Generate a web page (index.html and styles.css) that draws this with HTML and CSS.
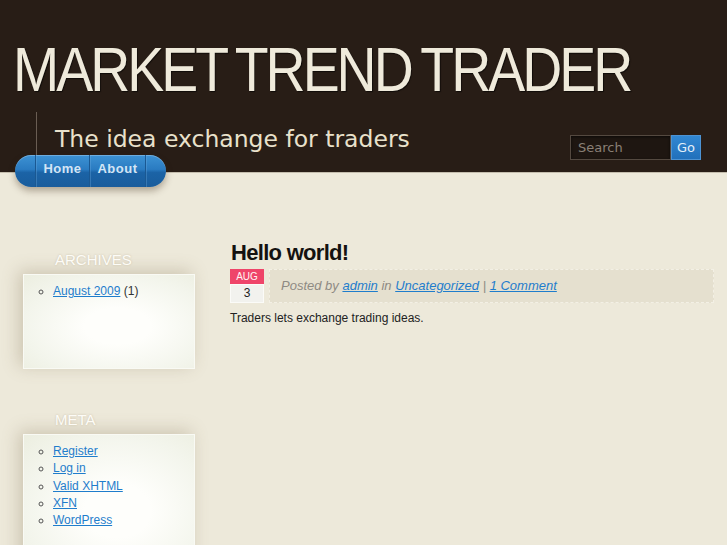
FILE: index.html
```html
<!DOCTYPE html>
<html>
<head>
<meta charset="utf-8">
<title>Market Trend Trader</title>
<link rel="stylesheet" href="styles.css">
</head>
<body>
<header class="site-header">
  <h1 class="site-title">MARKET TREND TRADER</h1>
  <div class="header-row">
    <p class="tagline">The idea exchange for traders</p>
    <form class="search">
      <input class="search-input" type="text" placeholder="Search">
      <button class="search-btn" type="button">Go</button>
    </form>
  </div>
</header>
<nav class="nav">
  <span class="nav-cap nav-cap-left"></span>
  <a class="nav-link nav-home" href="#">Home</a>
  <a class="nav-link nav-about" href="#">About</a>
  <span class="nav-cap nav-cap-right"></span>
</nav>
<div class="main">
  <aside class="sidebar">
    <section class="widget">
      <h2 class="widget-title">ARCHIVES</h2>
      <div class="widget-box widget-archives">
        <ul class="widget-list">
          <li><a href="#">August 2009</a>&nbsp;(1)</li>
        </ul>
      </div>
    </section>
    <section class="widget">
      <h2 class="widget-title">META</h2>
      <div class="widget-box widget-meta">
        <ul class="widget-list">
          <li><a href="#">Register</a></li>
          <li><a href="#">Log in</a></li>
          <li><a href="#">Valid XHTML</a></li>
          <li><a href="#">XFN</a></li>
          <li><a href="#">WordPress</a></li>
        </ul>
      </div>
    </section>
  </aside>
  <article class="post">
    <h2 class="post-title">Hello world!</h2>
    <div class="post-meta">
      <div class="date">
        <div class="date-month">AUG</div>
        <div class="date-day">3</div>
      </div>
      <div class="meta-bar">Posted by <a href="#">admin</a> in <a href="#">Uncategorized</a> | <a href="#">1 Comment</a></div>
    </div>
    <p class="post-body">Traders lets exchange trading ideas.</p>
  </article>
</div>
</body>
</html>
```
FILE: styles.css
```css
html, body {
  margin: 0;
  padding: 0;
}
body {
  background: #ede9da;
  font-family: "Liberation Sans", Arial, sans-serif;
  width: 727px;
  height: 545px;
  overflow: hidden;
}
.site-header {
  box-sizing: border-box;
  height: 173px;
  background: #281d16;
  border-bottom: 1px solid #c4bdad;
  padding-top: 38px;
}
.site-title {
  margin: 0;
  font-family: "Liberation Sans", Arial, sans-serif;
  font-weight: normal;
  font-size: 63px;
  line-height: 63px;
  letter-spacing: -3.4px;
  word-spacing: -2px;
  color: #efeadb;
  text-shadow: 1px 1px 1px rgba(0, 0, 0, 0.6);
  white-space: nowrap;
  padding-left: 13px;
  transform: scaleX(0.88);
  transform-origin: 13px 0;
}
.header-row {
  display: flex;
  justify-content: space-between;
  align-items: flex-start;
  margin-top: 11px;
}
.tagline {
  margin: 0 0 0 36px;
  height: 48px;
  border-left: 1px solid #6a5d53;
  padding: 13px 0 0 18px;
  font-family: "DejaVu Sans", sans-serif;
  font-size: 23.5px;
  line-height: 28px;
  color: #e9e1cb;
  white-space: nowrap;
}
.search {
  display: flex;
  margin: 23px 26px 0 0;
}
.search-input {
  box-sizing: border-box;
  width: 101px;
  height: 25px;
  margin: 0;
  padding: 0 0 0 7px;
  background: #1e1611;
  border: 1px solid #544940;
  box-shadow: inset 0 1px 3px rgba(0, 0, 0, 0.6);
  font-family: "DejaVu Sans", sans-serif;
  font-size: 13px;
  color: #d0c6b8;
  outline: none;
}
.search-input::placeholder {
  color: #8a8076;
}
.search-btn {
  box-sizing: border-box;
  width: 30px;
  height: 25px;
  margin: 0;
  padding: 0;
  border: 1px solid #4d93d3;
  background: linear-gradient(#3187d2, #2170bb);
  font-family: "DejaVu Sans", sans-serif;
  font-size: 13px;
  color: #e3eef8;
}
.nav {
  position: relative;
  z-index: 2;
  display: flex;
  width: 151px;
  height: 32px;
  margin: -18px 0 0 15px;
  border-radius: 16px;
  background: linear-gradient(#3d92d4 0%, #2a7bc1 45%, #1b63a6 55%, #195c9c 100%);
  box-shadow: 0 4px 7px rgba(60, 40, 20, 0.35), inset 0 1px 0 rgba(255, 255, 255, 0.25);
}
.nav-cap-left {
  width: 20px;
}
.nav-cap-right {
  width: 20px;
  border-left: 1px solid #1a5892;
  box-shadow: inset 1px 0 0 rgba(120, 180, 230, 0.3);
}
.nav-link {
  border-left: 1px solid #1a5892;
  box-shadow: inset 1px 0 0 rgba(120, 180, 230, 0.3);
  text-align: center;
  font-weight: bold;
  font-size: 13px;
  letter-spacing: 0.5px;
  line-height: 28px;
  color: #d3e5f5;
  text-decoration: none;
}
.nav-home {
  width: 53px;
}
.nav-about {
  width: 55px;
}
.main {
  display: flex;
  align-items: flex-start;
  padding-top: 53px;
}
.sidebar {
  width: 172px;
  margin-left: 23px;
  padding-top: 11px;
}
.widget {
  margin-bottom: 42px;
}
.widget-title {
  margin: 0 0 5px;
  padding-left: 32px;
  font-weight: normal;
  font-size: 15px;
  line-height: 18px;
  color: #fdfcf7;
  text-shadow: 0 0 2px rgba(160, 140, 110, 0.45);
}
.widget-box {
  box-sizing: border-box;
  border: 1px solid #f9faf4;
  background: radial-gradient(ellipse at 55% 55%, #fefefb 25%, #f3f5ec 70%, #eceee0 100%);
  box-shadow: -4px -3px 16px rgba(120, 100, 70, 0.28);
}
.widget-archives {
  min-height: 95px;
}
.widget-meta {
  min-height: 140px;
}
.widget-list {
  margin: 0;
  padding: 8px 0 8px 29px;
  list-style: circle;
  font-size: 12px;
  line-height: 17.3px;
  color: #333;
}
.widget-list li::marker {
  color: #555;
}
.widget-list a,
.meta-bar a {
  color: #1f7dcc;
  text-decoration: underline;
}
.post {
  width: 484px;
  margin-left: 35px;
}
.post-title {
  margin: 0 0 3px;
  padding-left: 1px;
  font-weight: bold;
  font-size: 22px;
  line-height: 26px;
  letter-spacing: -0.7px;
  color: #141210;
}
.post-meta {
  display: flex;
  gap: 5px;
  height: 34px;
}
.date {
  width: 34px;
}
.date-month {
  height: 15px;
  background: #ef456a;
  color: #fff3f4;
  font-size: 10px;
  line-height: 15px;
  text-align: center;
}
.date-day {
  box-sizing: border-box;
  height: 19px;
  background: #f2f2ee;
  border: 1px solid #fbfbf8;
  color: #222;
  font-size: 12px;
  line-height: 17px;
  text-align: center;
}
.meta-bar {
  flex: 1;
  box-sizing: border-box;
  height: 34px;
  padding-left: 11px;
  background: #e5e0cf;
  border: 1px dashed #f3f0e5;
  font-style: italic;
  font-size: 13px;
  line-height: 31px;
  color: #8e8a83;
}
.post-body {
  margin: 7px 0 0;
  font-size: 12px;
  line-height: 17px;
  color: #222;
}
```
